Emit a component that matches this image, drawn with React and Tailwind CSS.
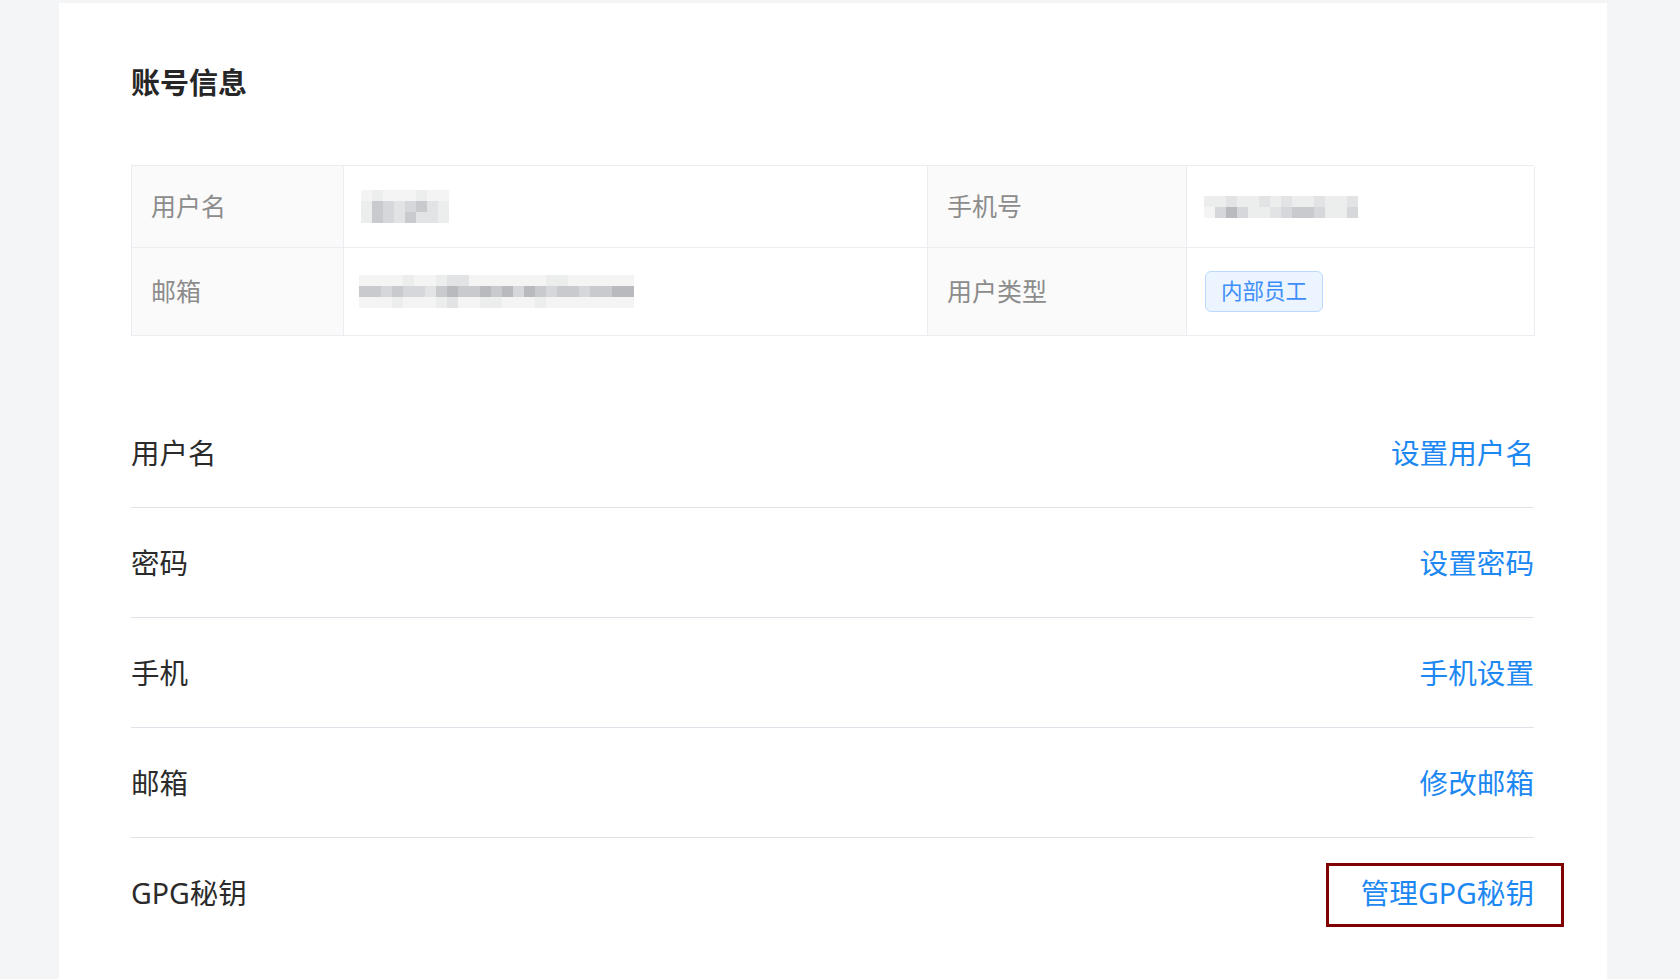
import React from 'react';

const greys = [
  'bg-[#f4f4f5]',
  'bg-[#eceded]',
  'bg-[#e2e3e5]',
  'bg-[#d6d7da]',
  'bg-[#c9cacd]',
  'bg-[#b9babd]',
  'bg-[#a9a9ad]',
];

// little mosaic standing in for the blurred values
const Mosaic = ({ rows }) => (
  <div className="flex flex-col">
    {rows.map((row, i) => (
      <div key={i} className="flex">
        {row.map((c, j) => (
          <div key={j} className={`w-[11px] h-[11px] ${greys[c]}`} />
        ))}
      </div>
    ))}
  </div>
);

const nameRows = [
  [0, 1, 0, 0, 0, 1, 0, 0],
  [1, 4, 3, 2, 3, 4, 2, 1],
  [1, 4, 3, 2, 4, 2, 2, 1],
];

const phoneRows = [
  [1, 1, 2, 1, 1, 2, 1, 2, 1, 1, 2, 1, 1, 2],
  [0, 3, 5, 3, 1, 1, 2, 3, 4, 4, 3, 1, 1, 3],
];

const mailRows = [
  [0, 0, 0, 0, 1, 0, 0, 1, 2, 2, 0, 0, 0, 0, 0, 0, 0, 1, 1, 0, 0, 0, 0, 0, 0],
  [4, 4, 3, 4, 3, 3, 2, 4, 5, 4, 4, 5, 4, 5, 3, 5, 4, 3, 4, 4, 3, 4, 4, 5, 5],
  [0, 0, 0, 1, 0, 0, 0, 1, 2, 0, 0, 1, 1, 0, 0, 0, 1, 0, 0, 0, 0, 0, 0, 0, 0],
];

const settings = [
  { label: '用户名', action: '设置用户名' },
  { label: '密码', action: '设置密码' },
  { label: '手机', action: '手机设置' },
  { label: '邮箱', action: '修改邮箱' },
  { label: 'GPG秘钥', action: '管理GPG秘钥', marked: true },
];

const font = "font-['Noto_Sans','Noto_Sans_CJK_SC',sans-serif]";

export default function App() {
  return (
    <div className={`min-h-screen bg-[#f4f5f7] pt-[3px] ${font}`}>
      <div className="ml-[59px] w-[1548px] min-h-[976px] bg-white pl-[72px] pr-[73px] pt-[60px] pb-[30px]">
        <h1 className="text-[29px] leading-[40px] font-bold text-[#262626]">账号信息</h1>

        <div className="mt-[62px] grid grid-cols-[212px_584px_259px_348px] border-t border-l border-[#ebedf2]">
          <div className="h-[82px] flex items-center px-[19px] bg-[#fafafa] border-r border-b border-[#ebedf2] text-[25px] text-[#8c8c8c]">用户名</div>
          <div className="h-[82px] flex items-center px-[17px] border-r border-b border-[#ebedf2]">
            <Mosaic rows={nameRows} />
          </div>
          <div className="h-[82px] flex items-center px-[19px] bg-[#fafafa] border-r border-b border-[#ebedf2] text-[25px] text-[#8c8c8c]">手机号</div>
          <div className="h-[82px] flex items-center px-[17px] border-r border-b border-[#ebedf2]">
            <Mosaic rows={phoneRows} />
          </div>

          <div className="h-[88px] flex items-center px-[19px] bg-[#fafafa] border-r border-b border-[#ebedf2] text-[25px] text-[#8c8c8c]">邮箱</div>
          <div className="h-[88px] flex items-center px-[15px] border-r border-b border-[#ebedf2]">
            <Mosaic rows={mailRows} />
          </div>
          <div className="h-[88px] flex items-center px-[19px] bg-[#fafafa] border-r border-b border-[#ebedf2] text-[25px] text-[#8c8c8c]">用户类型</div>
          <div className="h-[88px] flex items-center px-[18px] border-r border-b border-[#ebedf2]">
            <span className="h-[41px] px-[15px] flex items-center rounded-[6px] border border-[#bcdaff] bg-[#ebf4ff] text-[21.5px] text-[#3d8ef8]">内部员工</span>
          </div>
        </div>

        <div className="mt-[62px]">
          {settings.map((s, i) => (
            <div
              key={s.label}
              className={`h-[110px] flex items-center justify-between ${i < settings.length - 1 ? 'border-b border-[#dfe2e8]' : ''}`}
            >
              <span className="text-[28.5px] leading-[40px] text-[#2b2b2b]">{s.label}</span>
              <span className="relative text-[28.6px] leading-[40px] text-[#1d88f2] cursor-pointer">
                {s.action}
                {s.marked && (
                  <span className="absolute -left-[35px] -right-[30px] -top-[10px] -bottom-[14px] border-[3px] border-[#800000]" />
                )}
              </span>
            </div>
          ))}
        </div>
      </div>
    </div>
  );
}
